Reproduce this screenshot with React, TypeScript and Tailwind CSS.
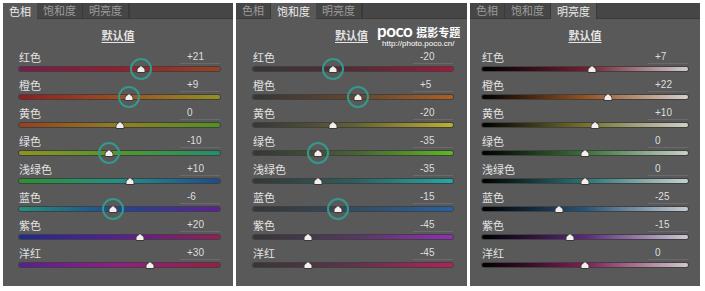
import React from 'react';

type Row = {
  label: string;
  value: number;
  ring?: boolean;
  bar: string;
};

const hueRows: Row[] = [
  { label: '红色', value: 21, ring: true, bar: 'bg-[linear-gradient(90deg,#7a1a4e,#981c2c_50%,#984222)]' },
  { label: '橙色', value: 9, ring: true, bar: 'bg-[linear-gradient(90deg,#921c20,#a04e1e_50%,#92921e)]' },
  { label: '黄色', value: 0, bar: 'bg-[linear-gradient(90deg,#983e1e,#92801e_50%,#50921e)]' },
  { label: '绿色', value: -10, ring: true, bar: 'bg-[linear-gradient(90deg,#92921e,#509828_50%,#1e926e)]' },
  { label: '浅绿色', value: 10, bar: 'bg-[linear-gradient(90deg,#2a922a,#1e928a_50%,#1e4a92)]' },
  { label: '蓝色', value: -6, ring: true, bar: 'bg-[linear-gradient(90deg,#1e927c,#1e4696_50%,#601e96)]' },
  { label: '紫色', value: 20, bar: 'bg-[linear-gradient(90deg,#1e2a92,#5a1e96_50%,#981e54)]' },
  { label: '洋红', value: 30, bar: 'bg-[linear-gradient(90deg,#5a1e96,#941e86_50%,#981e3e)]' },
];

const satRows: Row[] = [
  { label: '红色', value: -20, ring: true, bar: 'bg-[linear-gradient(90deg,#363636,#562a34_50%,#a8163a)]' },
  { label: '橙色', value: 5, ring: true, bar: 'bg-[linear-gradient(90deg,#363636,#62462e_50%,#b05e1e)]' },
  { label: '黄色', value: -20, bar: 'bg-[linear-gradient(90deg,#363636,#626032_50%,#c0b02a)]' },
  { label: '绿色', value: -35, ring: true, bar: 'bg-[linear-gradient(90deg,#363636,#466232_50%,#5aba1e)]' },
  { label: '浅绿色', value: -35, bar: 'bg-[linear-gradient(90deg,#363636,#2c5e5e_50%,#1eaca8)]' },
  { label: '蓝色', value: -15, ring: true, bar: 'bg-[linear-gradient(90deg,#363636,#324c62_50%,#2462a8)]' },
  { label: '紫色', value: -45, bar: 'bg-[linear-gradient(90deg,#363636,#563862_50%,#942cba)]' },
  { label: '洋红', value: -45, bar: 'bg-[linear-gradient(90deg,#363636,#62324c_50%,#ba1e58)]' },
];

const lumRows: Row[] = [
  { label: '红色', value: 7, bar: 'bg-[linear-gradient(90deg,#000000,#721c30_50%,#d0cccc)]' },
  { label: '橙色', value: 22, bar: 'bg-[linear-gradient(90deg,#000000,#98501e_50%,#d4d0cc)]' },
  { label: '黄色', value: 10, bar: 'bg-[linear-gradient(90deg,#000000,#76722a_50%,#d0d0c8)]' },
  { label: '绿色', value: 0, bar: 'bg-[linear-gradient(90deg,#000000,#367436_50%,#c8d0c8)]' },
  { label: '浅绿色', value: 0, bar: 'bg-[linear-gradient(90deg,#000000,#287676_50%,#c8d0d0)]' },
  { label: '蓝色', value: -25, bar: 'bg-[linear-gradient(90deg,#000000,#26547a_50%,#c8ccd0)]' },
  { label: '紫色', value: -15, bar: 'bg-[linear-gradient(90deg,#000000,#5c287e_50%,#ccc8d0)]' },
  { label: '洋红', value: 0, bar: 'bg-[linear-gradient(90deg,#000000,#821c56_50%,#d0c8cc)]' },
];

const tabs = ['色相', '饱和度', '明亮度'];

function fmt(v: number) {
  if (v > 0) return `+${v}`;
  return `${v}`;
}

function Thumb() {
  return (
    <svg width="9" height="8" viewBox="0 0 9 8" className="block">
      <polygon points="4.5,0.5 8.5,4 8.5,7.5 0.5,7.5 0.5,4" fill="#f4eeee" stroke="#3a3a3a" strokeWidth="1" />
    </svg>
  );
}

function SliderRow({ row }: { row: Row }) {
  const pos = `${(row.value + 100) / 2}%`;
  return (
    <div className="h-[28px]">
      <div className="flex h-[14px] items-center justify-between">
        <span className="text-[11px] leading-[14px] text-[#e2e2e2]">{row.label}</span>
        <span className="h-[14px] w-[40px] border-b border-[#6a6a6e] pl-[7px] font-['Liberation_Sans',sans-serif] text-[10px] leading-[13px] text-[#dedede]">
          {fmt(row.value)}
        </span>
      </div>
      <div className="relative h-[10px]">
        <div className={`absolute left-0 right-0 top-[3px] h-[4px] rounded-full shadow-[0_0_0_1px_rgba(0,0,0,0.28)] ${row.bar}`} />
        {row.ring && (
          <div
            className="absolute top-[-6px] h-[22px] w-[22px] -translate-x-1/2 rounded-full border-2 border-[#34998c]"
            style={{ left: pos }}
          />
        )}
        <div className="absolute top-[1px] -translate-x-1/2" style={{ left: pos }}>
          <Thumb />
        </div>
      </div>
    </div>
  );
}

function Panel({
  active,
  rows,
  width,
  pad,
  logo,
}: {
  active: number;
  rows: Row[];
  width: string;
  pad: string;
  logo?: boolean;
}) {
  return (
    <div className={`relative h-[283px] shrink-0 bg-[#595959] ${width}`}>
      <div className="flex h-[16px] bg-[#464646]">
        {tabs.map((t, i) => (
          <div
            key={t}
            className={
              i === active
                ? 'h-[16px] bg-[#595959] px-[6px] text-[11px] leading-[16px] text-[#ececec]'
                : 'h-[16px] border-b border-r border-[#3a3a3a] px-[6px] text-[11px] leading-[15px] text-[#9c9c9c]'
            }
          >
            {t}
          </div>
        ))}
        <div className="h-[16px] flex-1 border-b border-l border-[#3a3a3a]" />
      </div>
      <div className="mb-[8px] h-[23px] pt-[9px] text-center text-[11px] leading-[14px]">
        <span className="font-bold text-[#e4e4e4] underline underline-offset-2">默认值</span>
      </div>
      <div className={pad}>
        {rows.map((r) => (
          <SliderRow key={r.label} row={r} />
        ))}
      </div>
      {logo && (
        <div className="absolute left-[141px] top-[21px] text-white">
          <div className="flex items-end gap-[4px]">
            <span className="font-['Lato',sans-serif] text-[17px] font-bold leading-[14px] tracking-[-0.5px]">poco</span>
            <span className="text-[11px] font-bold leading-[12px]">摄影专题</span>
          </div>
          <div className="ml-[5px] mt-[2px] font-['Liberation_Sans',sans-serif] text-[8px] leading-[8px]">http://photo.poco.cn/</div>
        </div>
      )}
    </div>
  );
}

export default function App() {
  return (
    <div className="flex h-[291px] w-[705px] gap-[3px] bg-white pl-[3px] pt-[3px] font-['Noto_Sans_CJK_SC','Noto_Sans',sans-serif]">
      <Panel active={0} rows={hueRows} width="w-[230px]" pad="pl-[16px] pr-[13px]" />
      <Panel active={1} rows={satRows} width="w-[231px]" pad="pl-[17px] pr-[14px]" logo />
      <Panel active={2} rows={lumRows} width="w-[230px]" pad="px-[12px]" />
    </div>
  );
}
